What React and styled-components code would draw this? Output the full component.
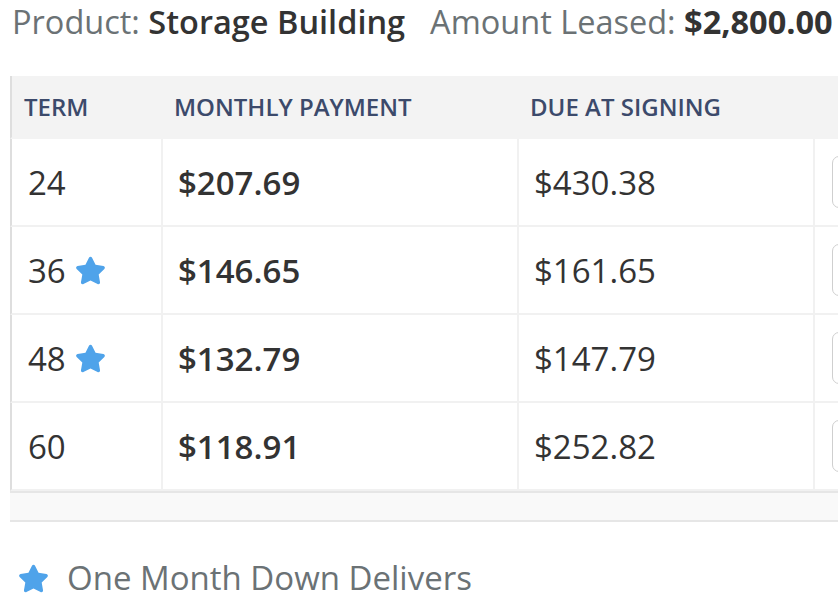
import React from 'react';
import styled, { createGlobalStyle } from 'styled-components';
import { FaStar } from 'react-icons/fa';

const GlobalStyle = createGlobalStyle`
  html, body {
    margin: 0;
    padding: 0;
    background: #fff;
    font-family: "Open Sans", "Noto Sans", sans-serif;
    overflow: hidden;
  }
`;

const Page = styled.div`
  width: 838px;
  height: 602px;
  overflow: hidden;
  padding-left: 10px;
  box-sizing: border-box;
`;

// summary line above the table
const Summary = styled.div`
  display: flex;
  gap: 25px;
  padding-left: 2px;
  font-size: 32.5px;
  line-height: 44px;
  color: #6b7275;
  white-space: nowrap;
`;

const Strong = styled.span`
  color: #333;
  font-weight: ${p => (p.$bold ? 700 : 600)};
`;

const Table = styled.table`
  margin-top: 32px;
  width: 900px;
  border-collapse: separate;
  border-spacing: 0;
  table-layout: fixed;
`;

const Th = styled.th`
  height: 63px;
  padding: 0 0 0 ${p => p.$pad || 11}px;
  background: #f3f3f3;
  text-align: left;
  font-size: 24px;
  font-weight: 600;
  color: #3c4a6b;
  text-transform: uppercase;
  box-sizing: border-box;
  border-left: ${p => (p.$first ? '2px solid #dedede' : 'none')};
  border-bottom: 2px solid #f3f3f3;
`;

const Td = styled.td`
  height: 88px;
  padding: 0 0 0 ${p => (p.$first ? 16 : 15)}px;
  box-sizing: border-box;
  font-size: 33px;
  font-weight: ${p => (p.$bold ? 600 : 400)};
  color: #333;
  border-bottom: 2px solid #f1f1f1;
  border-right: ${p => (p.$last ? 'none' : '2px solid #f1f1f1')};
  border-left: ${p => (p.$first ? '2px solid #dedede' : 'none')};
  vertical-align: middle;
`;

const Term = styled.span`
  display: inline-flex;
  align-items: center;
  gap: 9px;
  color: #333;
`;

const SelectButton = styled.button`
  display: block;
  margin-left: 2px;
  width: 120px;
  height: 52px;
  border: 1.5px solid #cfcfcf;
  border-radius: 7px;
  background: #fff;
`;

const FootCell = styled.td`
  height: 31px;
  padding: 0;
  box-sizing: border-box;
  background: #f9f9f9;
  border-top: 2px solid #e6e6e6;
  border-bottom: 2px solid #e6e6e6;
`;

const Legend = styled.div`
  display: flex;
  align-items: center;
  gap: 18px;
  margin-top: 36px;
  padding-left: 8px;
  font-size: 33px;
  line-height: 40px;
  color: #6b7275;
  white-space: nowrap;
`;

const Star = styled(FaStar)`
  color: #4fa3ea;
  flex: none;
`;

const rows = [
  { term: 24, star: false, monthly: '$207.69', due: '$430.38' },
  { term: 36, star: true, monthly: '$146.65', due: '$161.65' },
  { term: 48, star: true, monthly: '$132.79', due: '$147.79' },
  { term: 60, star: false, monthly: '$118.91', due: '$252.82' },
];

export default function App() {
  return (
    <Page>
      <GlobalStyle />
      <Summary>
        <span>Product: <Strong>Storage Building</Strong></span>
        <span>Amount Leased: <Strong $bold>$2,800.00</Strong></span>
      </Summary>

      <Table>
        <colgroup>
          <col style={{ width: 153 }} />
          <col style={{ width: 356 }} />
          <col style={{ width: 296 }} />
          <col style={{ width: 95 }} />
        </colgroup>
        <thead>
          <tr>
            <Th $first $pad={12}>Term</Th>
            <Th>Monthly Payment</Th>
            <Th>Due at Signing</Th>
            <Th></Th>
          </tr>
        </thead>
        <tbody>
          {rows.map(r => (
            <tr key={r.term}>
              <Td $first>
                <Term>
                  {r.term}
                  {r.star && <Star size={31} />}
                </Term>
              </Td>
              <Td $bold>{r.monthly}</Td>
              <Td>{r.due}</Td>
              <Td $last><SelectButton aria-label="Select" /></Td>
            </tr>
          ))}
        </tbody>
        <tfoot>
          <tr>
            <FootCell colSpan={4} />
          </tr>
        </tfoot>
      </Table>

      <Legend>
        <Star size={31} />
        One Month Down Delivers
      </Legend>
    </Page>
  );
}
